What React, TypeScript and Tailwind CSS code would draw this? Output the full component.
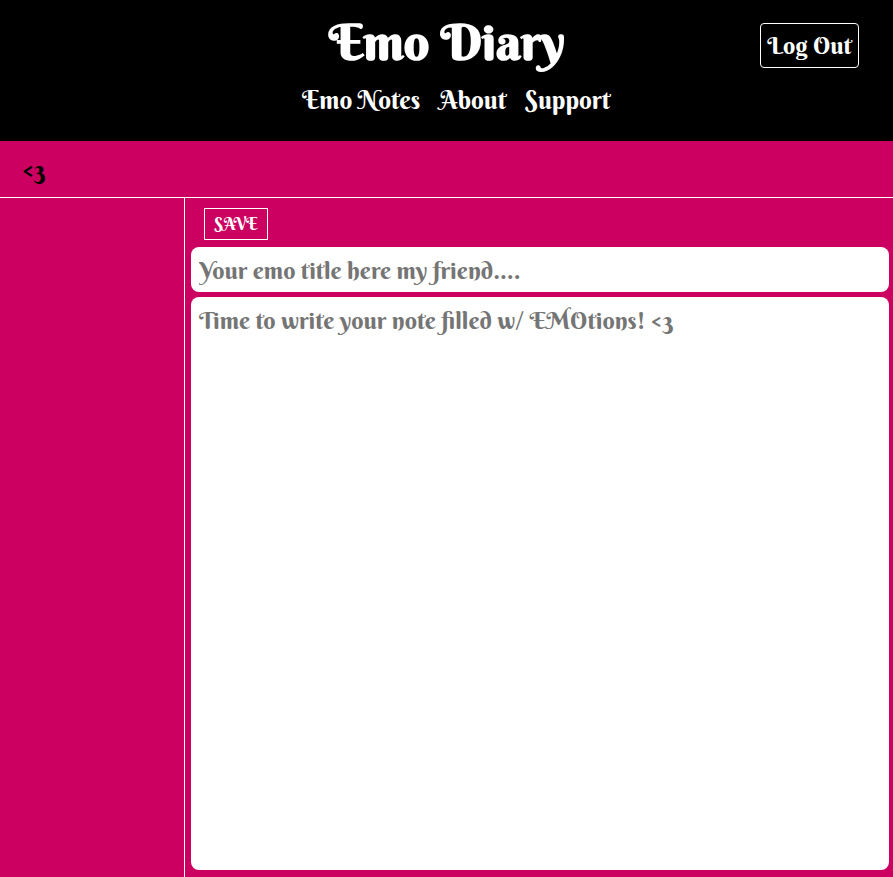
const links = ["Emo Notes", "About", "Support"];

function Header() {
  return (
    <header className="grid h-[141px] grid-cols-[302px_1fr_133px] bg-black text-white">
      <div />
      <div>
        <h1 className="ml-[27px] mt-[12px] h-[60px] whitespace-nowrap text-[50px] font-bold leading-[60px]">
          Emo Diary
        </h1>
        <nav className="mt-[12px] flex gap-[19px] whitespace-nowrap text-[25px] leading-[34px]">
          {links.map((label) => (
            <a key={label} href="#">
              {label}
            </a>
          ))}
        </nav>
      </div>
      <button className="mt-[23px] h-[45px] w-[99px] whitespace-nowrap rounded-[4px] border border-white pb-[2px] text-center text-[24px] leading-[40px]">
        Log Out
      </button>
    </header>
  );
}

export default function App() {
  return (
    <div className="flex h-screen flex-col overflow-hidden bg-[#cc0060] font-['Berkshire_Swash','Liberation_Serif',serif]">
      <Header />
      <div className="flex h-[57px] shrink-0 items-center border-b border-white pl-[22px] pt-[3px] text-[25px] leading-[34px] text-black">
        &lt;3
      </div>
      <main className="flex min-h-0 flex-1">
        <aside className="w-[185px] shrink-0 border-r border-white" />
        <section className="flex flex-1 flex-col pb-[7px] pl-[6px] pr-[4px] pt-[10px]">
          <button className="ml-[13px] h-[32px] w-[64px] shrink-0 border border-white text-center text-[17px] leading-[30px] text-white">
            SAVE
          </button>
          <input
            className="mt-[7px] h-[45px] w-full shrink-0 rounded-[8px] bg-white px-[8px] text-[24px] outline-none placeholder:text-[#757575]"
            placeholder="Your emo title here my friend...."
          />
          <textarea
            className="mt-[5px] w-full flex-1 resize-none rounded-[8px] bg-white px-[8px] pt-[7px] text-[24px] leading-[32px] outline-none placeholder:text-[#757575]"
            placeholder="Time to write your note filled w/ EMOtions! <3"
          />
        </section>
      </main>
    </div>
  );
}
